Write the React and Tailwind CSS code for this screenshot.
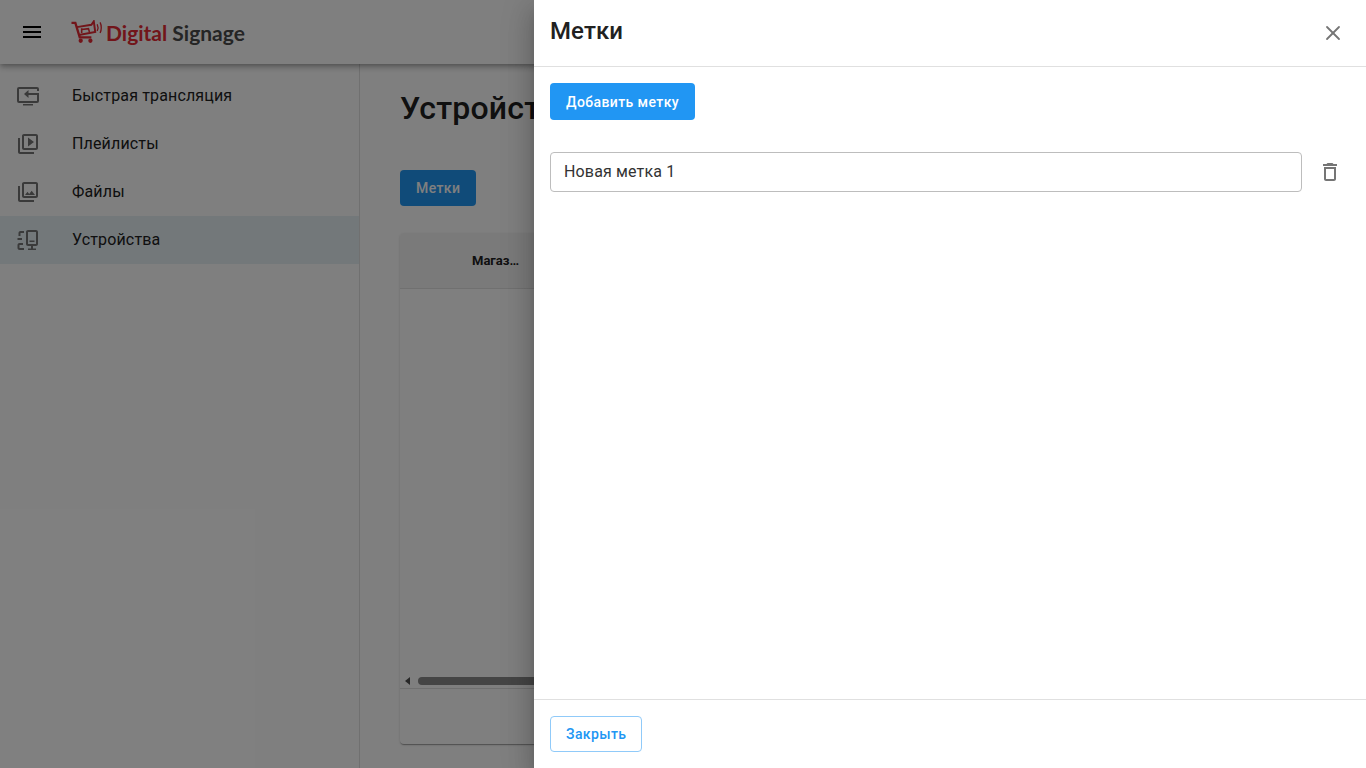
import React from 'react';
import { X } from 'lucide-react';

const NAV_ITEMS = [
  {
    label: 'Быстрая трансляция',
    icon: (
      <>
        <path d="M22 7V5a1 1 0 0 0-1-1H3a1 1 0 0 0-1 1v12a1 1 0 0 0 1 1h18a1 1 0 0 0 1-1v-7H11" fill="none" stroke="#757575" strokeWidth="2" />
        <path d="M12.500 6 8 10l4.500 4z" />
        <path d="M7 20h10v1.500H7z" />
      </>
    ),
  },
  {
    label: 'Плейлисты',
    icon: <path d="M4 6H2v14c0 1.100.9 2 2 2h14v-2H4V6zm16-4H8c-1.100 0-2 .9-2 2v12c0 1.100.9 2 2 2h12c1.100 0 2-.9 2-2V4c0-1.100-.9-2-2-2zm0 14H8V4h12v12zM12 5.500v9l6-4.500z" />,
  },
  {
    label: 'Файлы',
    icon: <path d="M20 4v12H8V4h12m0-2H8c-1.100 0-2 .9-2 2v12c0 1.100.9 2 2 2h12c1.100 0 2-.9 2-2V4c0-1.100-.9-2-2-2zm-8.500 9.670l1.690 2.260 2.480-3.100L19 15H9zM2 6v14c0 1.100.9 2 2 2h14v-2H4V6H2z" />,
  },
  {
    label: 'Устройства',
    active: true,
    icon: (
      <>
        <path d="M10 4c0-1.100.9-2 2-2h8c1.100 0 2 .9 2 2v12c0 1.100-.9 2-2 2h-8c-1.100 0-2-.9-2-2V4zm2 0v12h8V4h-8z" />
        <path d="M13.500 12.500h5V14h-5zM12 20.500h8V22h-8zM15 17.500h2V21h-2z" />
        <path d="M8 3H4.500C3.400 3 2.500 3.900 2.500 5v3h2V5H8V3zM1.500 10v2H6v-2H1.500zM1.500 17c0-1.100.9-2 2-2H7v2H3.500v3H8v2H3.500c-1.100 0-2-.9-2-2v-3z" />
      </>
    ),
  },
];

function Logo() {
  return (
    <div className="flex items-center gap-[3px]">
      <svg width="32" height="25" viewBox="0 0 33 25" fill="none" stroke="#e42a34" strokeWidth="2">
        <path d="M0.500 2.500h4l4.500 15h12" strokeWidth="2.400" />
        <path d="M6 7l15-2.500 2.500-3.500 1.500 11-17 3" />
        <path d="M11 8v5M11 9.500l7-1 1 3.500" strokeWidth="1.600" />
        <circle cx="10" cy="21" r="2.200" fill="#e42a34" stroke="none" />
        <circle cx="20" cy="21" r="2.200" fill="#e42a34" stroke="none" />
        <path d="M27 4c1 2 1 5 0 7M30 2c1.600 3 1.600 8 0 11" strokeWidth="1.400" />
      </svg>
      <span className="pt-[1px] font-['Lato',sans-serif] font-bold text-[21px] leading-none">
        <span className="text-[#e42a34]">Digital</span> <span className="text-[#4a4a4a]">Signage</span>
      </span>
    </div>
  );
}

function NavItem({ item }) {
  return (
    <div className={`h-12 flex items-center pl-4 ${item.active ? 'bg-[#e6f0f5]' : ''}`}>
      <svg width="24" height="24" viewBox="0 0 24 24" fill="#757575" className="shrink-0">
        {item.icon}
      </svg>
      <span className="ml-8 text-base text-[#212121] tracking-[0.15px]">{item.label}</span>
    </div>
  );
}

export default function App() {
  return (
    <div className="relative h-screen overflow-hidden bg-white font-['Roboto',sans-serif]">
      {/* Page under the drawer */}
      <div className="h-full flex flex-col">
        <header className="relative z-10 h-16 shrink-0 flex items-center pl-5 bg-white shadow-[0_2px_4px_-1px_rgba(0,0,0,.2),0_4px_5px_0_rgba(0,0,0,.14),0_1px_10px_0_rgba(0,0,0,.12)]">
          <svg width="24" height="24" viewBox="0 0 24 24" fill="#000" className="shrink-0">
            <path d="M3 18h18v-2H3v2zm0-5h18v-2H3v2zm0-7v2h18V6H3z" />
          </svg>
          <div className="ml-[27px]">
            <Logo />
          </div>
        </header>

        <div className="flex-1 flex min-h-0">
          <aside className="w-[360px] shrink-0 border-r border-[#e0e0e0] pt-2">
            {NAV_ITEMS.map(item => <NavItem key={item.label} item={item} />)}
          </aside>

          <main className="flex-1 min-w-0 pl-10 pt-[26px] pb-6 flex flex-col">
            <h1 className="text-[32px] leading-9 font-medium text-[#212121] tracking-[0.2px]">Устройства</h1>
            <button className="mt-[44px] self-start h-9 px-4 rounded bg-[#2196f3] text-white text-sm font-medium tracking-[0.4px]">Метки</button>
            <div className="mt-[27px] flex-1 w-[900px] flex flex-col rounded bg-white shadow-[0_2px_1px_-1px_rgba(0,0,0,.2),0_1px_1px_0_rgba(0,0,0,.14),0_1px_3px_0_rgba(0,0,0,.12)]">
              <div className="h-14 shrink-0 flex items-center pl-[72px] bg-[#f5f5f5] border-b border-[#e0e0e0] rounded-t">
                <span className="text-[13px] font-bold text-[#212121]">Магаз…</span>
              </div>
              <div className="flex-1" />
              <div className="h-3 shrink-0 flex items-center pl-[5px] gap-[8px]">
                <span className="w-0 h-0 border-y-[4px] border-y-transparent border-r-[5px] border-r-[#505050]" />
                <div className="h-2 flex-1 rounded-full bg-[#8a8a8a]" />
              </div>
              <div className="h-[56px] shrink-0 border-t border-[#e0e0e0] mt-[1px]" />
            </div>
          </main>
        </div>
      </div>

      {/* Backdrop */}
      <div className="absolute inset-0 z-20 bg-black/50" />

      {/* Drawer */}
      <div className="absolute inset-y-0 right-0 z-20 w-[832px] flex flex-col bg-white shadow-[0_8px_10px_-5px_rgba(0,0,0,.2),0_16px_24px_2px_rgba(0,0,0,.14),0_6px_30px_5px_rgba(0,0,0,.12)]">
        <div className="h-[67px] shrink-0 flex items-center justify-between pl-4 pr-[21px] pb-[5px] border-b border-[#e0e0e0]">
          <h2 className="text-2xl font-medium text-[#212121] tracking-[0.1px]">Метки</h2>
          <X size={24} strokeWidth={1.800} className="text-[#757575] mt-[5px]" />
        </div>

        <div className="flex-1 min-h-0 px-4 pt-4">
          <button className="h-[37px] px-4 rounded bg-[#2196f3] text-white text-sm font-medium tracking-[0.4px]">Добавить метку</button>
          <div className="mt-8 flex items-center gap-4">
            <input
              readOnly
              value="Новая метка 1"
              className="w-[752px] h-10 px-[13px] pb-[2px] rounded border border-[#bdbdbd] text-base text-[#333333] tracking-[0.15px] outline-none bg-white"
            />
            <svg width="24" height="24" viewBox="0 0 24 24" fill="#757575" className="shrink-0">
              <path d="M6 19c0 1.100.9 2 2 2h8c1.100 0 2-.9 2-2V7H6v12zM8 9h8v10H8V9zm7.500-5l-1-1h-5l-1 1H5v2h14V4z" />
            </svg>
          </div>
        </div>

        <div className="h-[69px] shrink-0 flex items-center px-4 border-t border-[#e0e0e0]">
          <button className="h-9 px-[15px] rounded border border-[#90caf9] text-[#2196f3] text-sm font-medium tracking-[0.4px] bg-white">Закрыть</button>
        </div>
      </div>
    </div>
  );
}
